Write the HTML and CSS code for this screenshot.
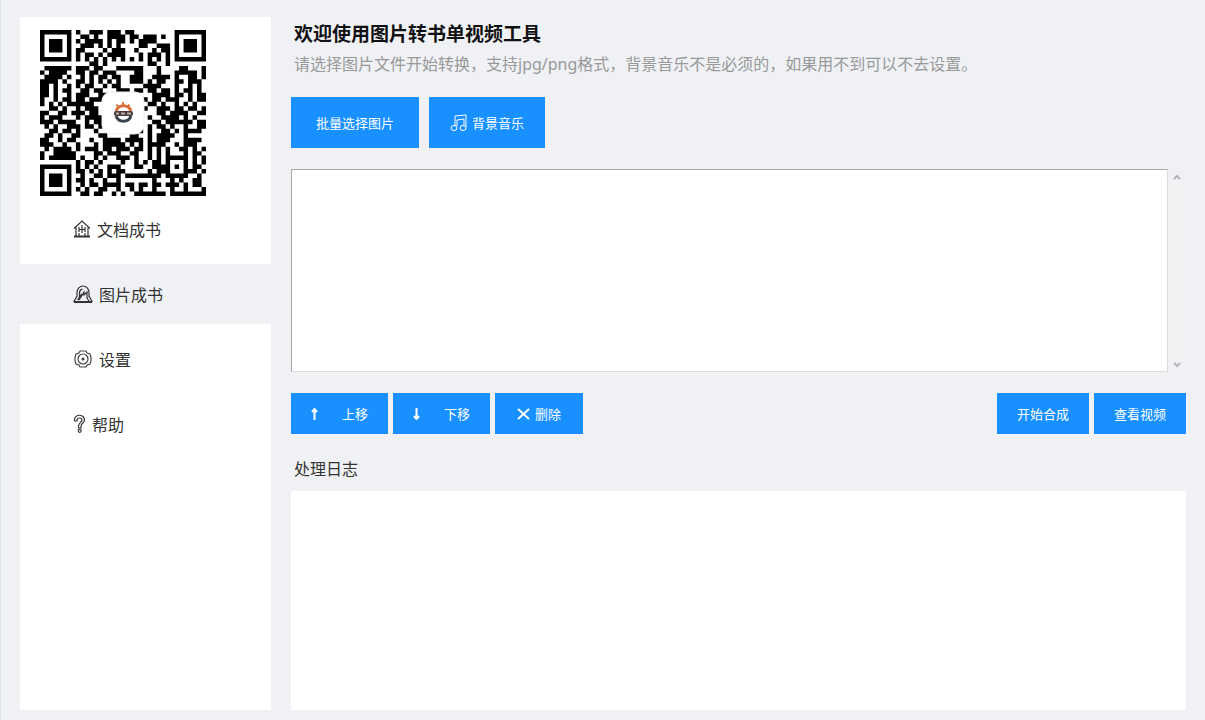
FILE: index.html
```html
<!DOCTYPE html>
<html lang="zh-CN">
<head>
<meta charset="utf-8">
<title>图片转书单视频工具</title>
<link rel="stylesheet" href="styles.css">
</head>
<body>
<div class="app">
  <aside class="sidebar">
    <div class="qr">
      <svg class="qr-code" viewBox="0 0 37 37" role="img" aria-label="二维码"><path id="qr-modules" fill="#000"/></svg>
      <svg class="qr-logo" viewBox="0 0 44 44" aria-hidden="true">
        <rect x="1" y="1" width="42" height="42" rx="9" fill="#fff" stroke="#ededed"/>
        <path d="M15 20a8 8 0 0 1 15 0" fill="none" stroke="#d9703a" stroke-width="3"/>
        <path d="M15.500 13.500l1.500 2M22 11v3M28.500 13.500l-1.500 2" stroke="#d9703a" stroke-width="2"/>
        <path d="M15 25a8 8 0 0 0 15 0" fill="none" stroke="#3b424f" stroke-width="3"/>
        <rect x="13" y="20" width="19" height="5" rx="2" fill="#4b3d3d"/>
        <path d="M15 22.500h3m2 0h4m2 0h4" stroke="#b9b0ad" stroke-width="2"/>
      </svg>
    </div>
    <nav class="nav">
      <a class="nav-item" href="#doc">
        <svg width="18" height="20" viewBox="0 0 18 20" fill="none" stroke="#333" stroke-width="1.2"><path d="M1 9.5L9 2l8 7.5M3 8.500V17M15 8.500V17M9 6v8M5.500 10.500h7M6 17v-3M12 17v-3M6 8v5M12 8v5"/><path d="M1 17.500h16" stroke-width="2"/></svg>
        文档成书</a>
      <a class="nav-item active" href="#image" aria-current="page">
        <svg width="20" height="20" viewBox="0 0 20 20" fill="none" stroke="#333" stroke-width="1.2"><path d="M4 13V8.500a6 6.500 0 0 1 12 0V13M4 12l-3 5.500h18L16 12M6.500 13V9a4 4 0 0 1 3-4"/><path d="M6 16l5-8v3l3-3v6l2 3" /><path d="M1 18h18M5 16l4-6" stroke-width="2"/></svg>
        图片成书</a>
      <a class="nav-item" href="#settings">
        <svg width="20" height="20" viewBox="0 0 20 20" fill="none" stroke="#444" stroke-width="1.2"><path d="M7 2h6l1 2 3 1 1 3v4l-1 3-3 1-1 2H7l-1-2-3-1-1-3V8l1-3 3-1z"/><circle cx="10" cy="10" r="5"/><circle cx="10" cy="10" r="1" fill="#222"/></svg>
        设置</a>
      <a class="nav-item" href="#help">
        <svg width="13" height="20" viewBox="0 0 13 20" fill="none" stroke="#333" stroke-width="1.2"><path d="M1.500 7V5.500A5 4.500 0 0 1 11.500 6C11.500 9 8 9.500 8 12v2H5.500v-2C5.500 9 9 8 9 6a2.500 2 0 0 0-5 0v1z"/><circle cx="6.700" cy="16.800" r="1.500"/></svg>
        帮助</a>
    </nav>
  </aside>
  <main class="main">
    <h1 class="title">欢迎使用图片转书单视频工具</h1>
    <p class="subtitle">请选择图片文件开始转换，支持jpg/png格式，背景音乐不是必须的，如果用不到可以不去设置。</p>
    <div class="picker">
      <button class="btn btn-large" type="button">批量选择图片</button>
      <button class="btn btn-large btn-music" type="button">
        <svg width="17" height="18" viewBox="0 0 17 18" fill="none" stroke="#fff" stroke-width="1"><path d="M5 12V2l11-1v12M7 12V6l7-1v6"/><ellipse cx="4" cy="14" rx="3" ry="2.500"/><ellipse cx="13" cy="14" rx="3" ry="2.500"/></svg>
        背景音乐</button>
    </div>
    <div class="list">
      <textarea class="list-box" aria-label="图片列表"></textarea>
      <div class="scrollbar" aria-hidden="true">
        <svg width="8" height="6" viewBox="0 0 8 6"><path d="M1 5l3-3 3 3"/></svg>
        <svg width="8" height="6" viewBox="0 0 8 6"><path d="M1 1l3 3 3-3"/></svg>
      </div>
    </div>
    <div class="actions">
      <button class="btn btn-move" type="button">
        <svg width="7" height="12" viewBox="0 0 7 12" fill="none" stroke="#fff" stroke-width="2"><path d="M3.500 12V2M1 4l2.500-3L6 4"/></svg>
        上移</button>
      <button class="btn btn-move" type="button">
        <svg width="7" height="12" viewBox="0 0 7 12" fill="none" stroke="#fff" stroke-width="2"><path d="M3.500 0v10M1 8l2.500 3L6 8"/></svg>
        下移</button>
      <button class="btn btn-delete" type="button">
        <svg width="13" height="12" viewBox="0 0 13 12" fill="none" stroke="#fff" stroke-width="2"><path d="M1 1l11 10M12 1L1 11"/></svg>
        删除</button>
      <span class="spacer"></span>
      <button class="btn" type="button">开始合成</button>
      <button class="btn" type="button">查看视频</button>
    </div>
    <label class="log-label" for="log">处理日志</label>
    <textarea class="log" id="log" readonly></textarea>
  </main>
</div>
<script src="qr.js"></script>
</body>
</html>
```
FILE: styles.css
```css
* { box-sizing: border-box; }

body {
  margin: 0;
  background: #eff1f5;
  color: #333;
  font-family: "Noto Sans", "Noto Sans CJK SC", sans-serif;
  font-size: 16px;
}

.app {
  display: flex;
  gap: 20px;
  min-height: 100vh;
  padding: 17px 19px 10px;
  border-left: 1px solid #dfe2e5;
}

.sidebar {
  flex: 0 0 251px;
  background: #fff;
}

.qr {
  display: grid;
  place-items: center;
  width: 166px;
  height: 166px;
  margin: 13px 20px 0;
}

.qr-code, .qr-logo { grid-area: 1 / 1; }
.qr-code { width: 166px; height: 166px; }
.qr-logo { width: 44px; height: 44px; }

.nav {
  display: flex;
  flex-direction: column;
  gap: 5px;
  padding-top: 3px;
}

.nav-item {
  display: flex;
  align-items: center;
  gap: 6px;
  height: 60px;
  padding-left: 53px;
  color: #333;
  text-decoration: none;
}

.nav-item.active { background: #eff1f5; }

.main {
  flex: 1;
  min-width: 0;
  display: flex;
  flex-direction: column;
}

.title {
  margin: 0;
  padding-left: 3px;
  color: #111;
  font-size: 19px;
  line-height: 34px;
}

.subtitle {
  margin: 0 0 20px;
  padding-left: 3px;
  color: #999;
  line-height: 26px;
}

.picker { display: flex; gap: 10px; }

.btn {
  display: flex;
  align-items: center;
  justify-content: center;
  gap: 5px;
  height: 41px;
  padding: 0 20px;
  border: 0;
  background: #1890ff;
  color: #fff;
  font-family: inherit;
  font-size: 13px;
}

.btn-large { height: 51px; padding: 0 25px; }
.btn-music { padding: 0 21px; }
.btn-move { gap: 24px; }
.btn-delete { padding: 0 22px; }

.list {
  display: flex;
  height: 203px;
  margin: 21px 0;
}

.list-box {
  flex: 1;
  border: 1px solid #dcdcdc;
  border-top-color: #a8a8a8;
  border-left-color: #a8a8a8;
  background: #fff;
  resize: none;
}

.scrollbar {
  display: flex;
  flex-direction: column;
  align-items: center;
  justify-content: space-between;
  width: 18px;
  padding: 5px 0 4px;
  background: #f0f1f3;
}

.scrollbar path { fill: none; stroke: #b2b4b8; stroke-width: 2; }

.actions { display: flex; gap: 5px; }
.spacer { flex: 1; }

.log-label {
  padding: 20px 0 7px 3px;
  line-height: 30px;
}

.log {
  flex: 1;
  width: 100%;
  border: 0;
  background: #fff;
  resize: none;
}
```
FILE: qr.js
```javascript
const rows = [
  "#######.#..###.###" + ".##.........#######",
  "#.....#..##.#..###" + "#.##.###.#..#.....#",
  "#.###.#.#.####.#.#" + "#.#.####....#.###.#",
  "#.###.#..###.#.#.#" + "....##..###.#.###.#",
  "#.###.#.##....#.##" + "#..#...#.##.#.###.#",
  "#.....#.#.##.#.###" + "#...#.###.#.#.....#",
  "#######.#.#.#.#.#." + "#.#.#.#.#.#.#######",
  "...........##.#..." + "......##..#........",
  ".######.###.##...#" + "#####...#....##...#",
  "#.####..##.##.###." + "...##...#...#####.#",
  ".####.#..#.#.##.##" + "..###..####.#..##.#",
  "####.#..##.#.#.#.#" + "..###.#.##..##.###.",
  "##.#..#.#.##..#.##" + ".....####...#..#.#.",
  "##.#.##..##.##...#" + "##.##.##.##.#.##.#.",
  "##.#..#.###..##..." + ".......####.##.#.##",
  "#..#.##.##.###...." + ".....#.##.###..#.##",
  "#.#.#.######......" + "......##.#..#.#.#..",
  "..##.#..#.###....." + ".....#..###.##.##.#",
  "##..##.###.##....." + "........##.####..##",
  "#.###...#.####...." + "......#..####.#.#..",
  "###.####..#.##...." + ".......##.######.##",
  ".#.#..###.##.#...." + "......#.##.#..#..##",
  "..##.##.#...#....." + "....#.#..##.#.####.",
  ".##.#..##....##..." + "..##..#.####..#....",
  "##..#.##...#..####" + ".####.#.###...####.",
  "###..#..#...#.####" + "#.#.#.####..#.###..",
  ".#.####.#.###.##.#" + "##.##.#.#.#..##.#.#",
  "#..#####....##.###" + "..##..#.#.#...#.##.",
  "#.######.#..#.#..#" + "##.#..#.#.#####.#.#",
  "........#.##.#...." + "#..#.#.##.#...#.#.#",
  "#######.#.#.#..###" + "...##..####.#.#.##.",
  "#.....#.##.#.#.#.#" + "#.....#.###...###.#",
  "#.###.#..#..##.###" + ".########.#####..#.",
  "#.###.#.##.#..#..#" + ".......#...#.#..##.",
  "#.###.#..#.##.####" + ".##.##.##.###.#.##.",
  "#.....#.#.#..##..#" + "..#.#..#...#..#...#",
  "#######..##.##..#." + "#..#######.########"
];

let path = "";
rows.forEach((row, y) => {
  for (const run of row.matchAll(/#+/g)) {
    const n = run[0].length;
    path += `M${run.index} ${y}h${n}v1h-${n}z`;
  }
});
document.getElementById("qr-modules").setAttribute("d", path);
```
